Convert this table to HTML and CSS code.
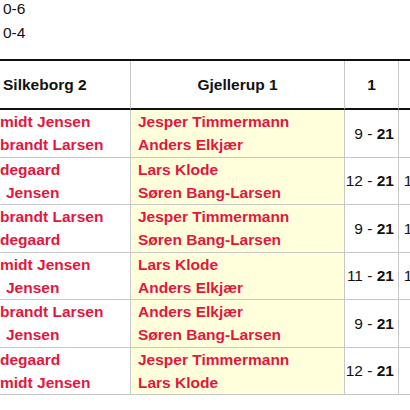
FILE: index.html
```html
<!DOCTYPE html>
<html>
<head>
<meta charset="utf-8">
<link rel="stylesheet" href="styles.css">
</head>
<body>
<div class="page">
  <div class="prev">
    <div>0-6</div>
    <div>0-4</div>
  </div>
  <table class="match">
    <thead>
      <tr>
        <th class="c1 home">Silkeborg 2</th>
        <th class="c2">Gjellerup 1</th>
        <th class="c3">1</th>
        <th class="c4">2</th>
        <th class="c3">3</th>
      </tr>
    </thead>
    <tbody>
      <tr>
        <td class="names"><div>midt Jensen</div><div>brandt Larsen</div></td>
        <td class="names away"><div>Jesper Timmermann</div><div>Anders Elkjær</div></td>
        <td class="score">9 - <b>21</b></td>
        <td class="score">7 - <b>21</b></td>
        <td class="score"></td>
      </tr>
      <tr>
        <td class="names"><div>degaard</div><div class="ind">Jensen</div></td>
        <td class="names away"><div>Lars Klode</div><div>Søren Bang-Larsen</div></td>
        <td class="score">12 - <b>21</b></td>
        <td class="score">16 - <b>21</b></td>
        <td class="score"></td>
      </tr>
      <tr>
        <td class="names"><div>brandt Larsen</div><div>degaard</div></td>
        <td class="names away"><div>Jesper Timmermann</div><div>Søren Bang-Larsen</div></td>
        <td class="score">9 - <b>21</b></td>
        <td class="score">14 - <b>21</b></td>
        <td class="score"></td>
      </tr>
      <tr>
        <td class="names"><div>midt Jensen</div><div class="ind">Jensen</div></td>
        <td class="names away"><div>Lars Klode</div><div>Anders Elkjær</div></td>
        <td class="score">11 - <b>21</b></td>
        <td class="score">13 - <b>21</b></td>
        <td class="score"></td>
      </tr>
      <tr>
        <td class="names"><div>brandt Larsen</div><div class="ind">Jensen</div></td>
        <td class="names away"><div>Anders Elkjær</div><div>Søren Bang-Larsen</div></td>
        <td class="score">9 - <b>21</b></td>
        <td class="score">8 - <b>21</b></td>
        <td class="score"></td>
      </tr>
      <tr>
        <td class="names"><div>degaard</div><div>midt Jensen</div></td>
        <td class="names away"><div>Jesper Timmermann</div><div>Lars Klode</div></td>
        <td class="score">12 - <b>21</b></td>
        <td class="score">5 - <b>21</b></td>
        <td class="score"></td>
      </tr>
    </tbody>
  </table>
</div>
</body>
</html>
```
FILE: styles.css
```css
html, body {
  margin: 0;
  padding: 0;
  background: #fff;
}

.page {
  width: 410px;
  height: 410px;
  overflow: hidden;
  font-family: "Liberation Sans", Arial, sans-serif;
  font-size: 15.5px;
  color: #111;
}

.prev {
  margin-top: -3px;
  padding-left: 3px;
  line-height: 24px;
}

.match {
  margin-top: 14px;
  border-collapse: separate;
  border-spacing: 0;
  table-layout: fixed;
  width: 511px;
  border-top: 2px solid #111;
}

.match th {
  box-sizing: border-box;
  padding: 12px 0;
  line-height: 23px;
  font-weight: bold;
  text-align: center;
  border-bottom: 2px solid #111;
  border-right: 1px solid #c8c8c8;
  color: #111;
}

.match th.c1 { width: 131px; }
.match th.c2 { width: 214px; }
.match th.c3 { width: 54px; }
.match th.c4 { width: 58px; }

.match th.home {
  text-align: left;
  padding-left: 3px;
}

.match td {
  padding: 0;
  line-height: 23.25px;
  border-right: 1px solid #c8c8c8;
  border-bottom: 1px solid #c8c8c8;
  vertical-align: middle;
  white-space: nowrap;
  overflow: hidden;
}

.names {
  color: #e3173d;
  font-weight: bold;
}

.names.away {
  background: #ffffdc;
  padding-left: 7px;
}

.ind {
  padding-left: 6px;
}

.score {
  text-align: right;
  padding-right: 4px !important;
  color: #111;
}

.score b {
  font-weight: bold;
}
```
